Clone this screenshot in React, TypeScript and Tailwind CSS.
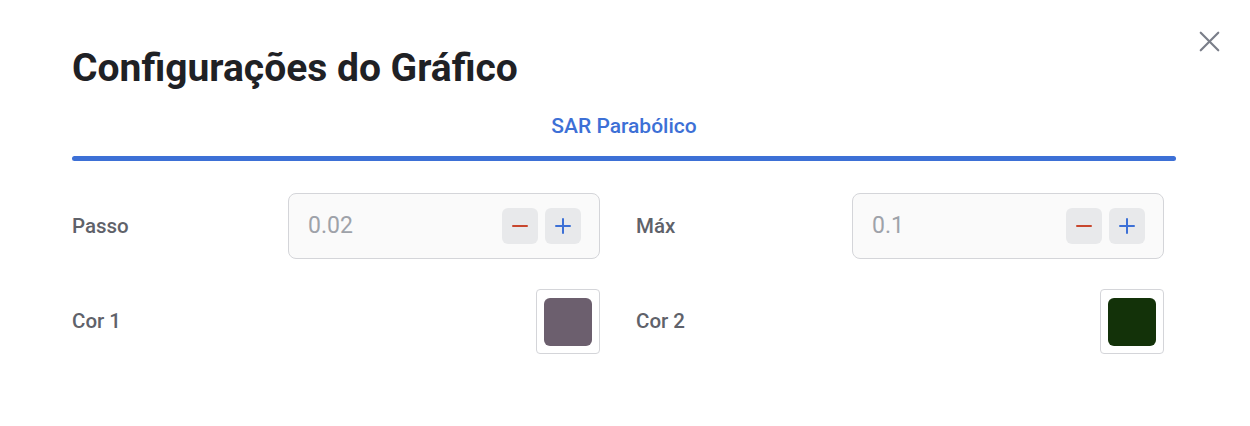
import { X, Minus, Plus } from "lucide-react";

const FONT = { fontFamily: "Roboto, 'Noto Sans', sans-serif" };

function Stepper({ value }: { value: string }) {
  return (
    <div className="flex h-[66px] w-[312px] items-center justify-between rounded-lg border border-[#d4d5d9] bg-[#fafafa] pl-[19px] pr-[18px]">
      <span className="text-[23px] text-[#9ea2a9]">{value}</span>
      <div className="flex gap-[7px]">
        <button className="flex h-9 w-9 items-center justify-center rounded-md bg-[#e8e9eb]">
          <Minus size={24} strokeWidth={2} className="text-[#c8472e]" />
        </button>
        <button className="flex h-9 w-9 items-center justify-center rounded-md bg-[#e8e9eb]">
          <Plus size={24} strokeWidth={2} className="text-[#3d70d6]" />
        </button>
      </div>
    </div>
  );
}

function ColorField({ color }: { color: string }) {
  return (
    <div className="flex h-[65px] w-16 items-center justify-center rounded border border-[#d4d5d9] bg-white">
      <div className="h-12 w-12 rounded-md" style={{ backgroundColor: color }} />
    </div>
  );
}

function Row({ label, children }: { label: string; children: React.ReactNode }) {
  return (
    <div className="flex items-center justify-between">
      <span className="text-[20.5px] font-medium text-[#5f626a]">{label}</span>
      {children}
    </div>
  );
}

export default function App() {
  return (
    <div className="relative h-[426px] w-[1250px] bg-white" style={FONT}>
      <button className="absolute right-[23px] top-[24px] text-[#7a7e89]">
        <X size={35} strokeWidth={1.5} />
      </button>
      <div className="pl-[72px] pr-[74px] pt-[44px]">
        <h1 className="text-[39px] font-bold leading-[48px] text-[#1f2125]">
          Configurações do Gráfico
        </h1>
        <div className="mt-[18px] flex flex-col items-center">
          <span className="text-[21px] font-medium leading-[32px] text-[#3d70d6]">SAR Parabólico</span>
          <div className="mt-[14px] h-[5px] w-full rounded-full bg-[#3d70d6]" />
        </div>
        <div className="mt-[32px] grid w-[1092px] grid-cols-2 gap-x-9 gap-y-[30px]">
          <Row label="Passo">
            <Stepper value="0.02" />
          </Row>
          <Row label="Máx">
            <Stepper value="0.1" />
          </Row>
          <Row label="Cor 1">
            <ColorField color="#6c5f6e" />
          </Row>
          <Row label="Cor 2">
            <ColorField color="#133209" />
          </Row>
        </div>
      </div>
    </div>
  );
}
